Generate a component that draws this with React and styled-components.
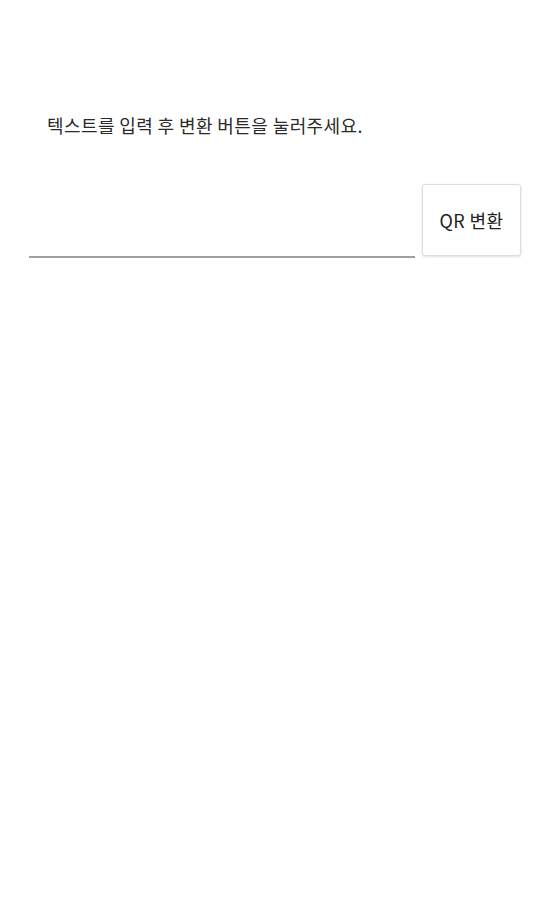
import React, { useState } from 'react';
import styled, { createGlobalStyle } from 'styled-components';

const GlobalStyle = createGlobalStyle`
    body {
        margin: 0;
        background: #fff;
        font-family: "Noto Sans CJK KR", "Noto Sans", sans-serif;
    }
`;

const Page = styled.div`
    padding: 109px 22px 0 29px;
`;

const Guide = styled.p`
    margin: 0 0 0 18px;
    font-size: 18px;
    letter-spacing: 0.4px;
    line-height: 32px;
    color: #2a2a2a;
`;

const Row = styled.div`
    display: flex;
    align-items: flex-end;
    gap: 7px;
    margin-top: 43px;
`;

const Input = styled.input`
    flex: 1;
    min-width: 0;
    height: 40px;
    border: none;
    border-bottom: 2px solid #a0a0a0;
    outline: none;
    font-size: 18px;
    font-family: inherit;
    background: transparent;
    padding: 0;
`;

const Button = styled.button`
    width: 99px;
    height: 72px;
    margin-bottom: 2px;
    background: #fff;
    border: 1px solid #ddd;
    border-radius: 3px;
    box-shadow: 0 1px 3px rgba(0, 0, 0, 0.12);
    font-family: inherit;
    font-size: 18px;
    letter-spacing: 0.4px;
    color: #222;
`;

export default function App() {
    const [text, setText] = useState('');

    return (
        <Page>
            <GlobalStyle />
            <Guide>텍스트를 입력 후 변환 버튼을 눌러주세요.</Guide>
            <Row>
                <Input value={text} onChange={(e) => setText(e.target.value)} />
                <Button>QR 변환</Button>
            </Row>
        </Page>
    );
}
